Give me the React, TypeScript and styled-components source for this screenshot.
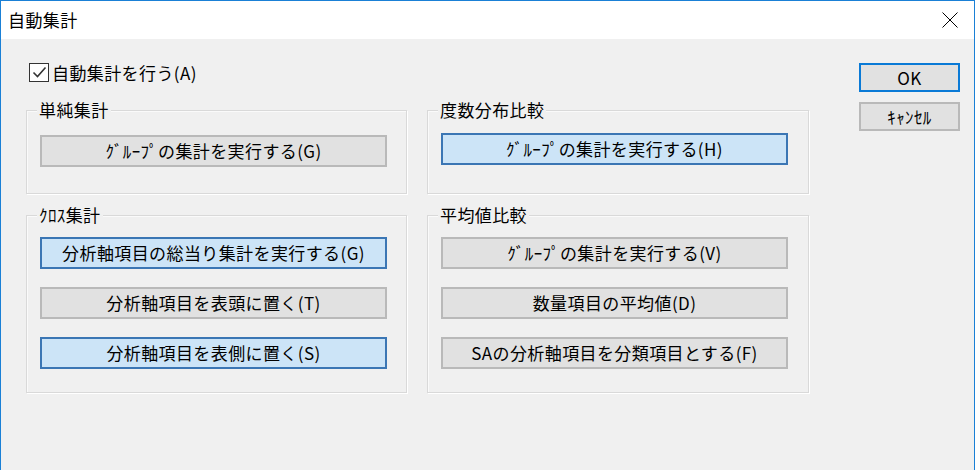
import React from "react";
import styled, { createGlobalStyle } from "styled-components";

const FONT = `"Noto Sans CJK JP", "Noto Sans CJK SC", "Noto Sans", sans-serif`;

const Global = createGlobalStyle`
  html, body { margin: 0; padding: 0; background: #ffffff; }
  * { box-sizing: border-box; }
`;

const Window = styled.div`
  width: 975px;
  height: 470px;
  border: 1px solid #1a80d6;
  border-bottom: none;
  display: flex;
  flex-direction: column;
  overflow: hidden;
  font-family: ${FONT};
  font-size: 17px;
  letter-spacing: 0.4px;
  color: #000;
`;

const TitleBar = styled.div`
  height: 38px;
  flex: none;
  background: #ffffff;
  display: flex;
  align-items: center;
`;

const Title = styled.div`
  padding-left: 7px;
  font-size: 17px;
  line-height: 20px;
  color: #000;
`;

const CloseButton = styled.div`
  margin-left: auto;
  width: 48px;
  height: 38px;
  display: flex;
  align-items: center;
  justify-content: center;
`;

const Body = styled.div`
  flex: 1;
  background: #f0f0f0;
  display: flex;
  padding: 24px 14px 0 25px;
`;

const Main = styled.div`
  display: flex;
  flex-direction: column;
`;

const CheckRow = styled.label`
  display: flex;
  align-items: center;
  gap: 3px;
  margin-left: 3px;
  height: 19px;
  line-height: 19px;
`;

const Box = styled.span`
  width: 20px;
  height: 19px;
  border: 1px solid #333333;
  background: #ffffff;
  display: flex;
  align-items: center;
  justify-content: center;
`;

const Groups = styled.div`
  margin-top: 28px;
  display: grid;
  grid-template-columns: 381px 382px;
  grid-template-rows: 84px 178px;
  column-gap: 20px;
  row-gap: 21px;
`;

const Group = styled.div<{ $padTop: number }>`
  position: relative;
  border: 1px solid #d9d9d9;
  box-shadow: 1px 1px 0 #ffffff, inset 1px 1px 0 #fafafa;
  padding: ${(p) => p.$padTop}px 0 0 13px;
  display: flex;
  flex-direction: column;
  gap: 18px;
`;

const Legend = styled.span`
  position: absolute;
  top: -11px;
  left: 10px;
  padding: 0 2px;
  background: #f0f0f0;
  line-height: 20px;
  font-size: 17px;
`;

const Button = styled.button<{ $active?: boolean }>`
  width: 347px;
  height: 32px;
  flex: none;
  margin: 0;
  padding: 0;
  font-family: ${FONT};
  font-size: 17px;
  letter-spacing: 0.4px;
  line-height: 20px;
  color: #000;
  background: ${(p) => (p.$active ? "#cce4f7" : "#e1e1e1")};
  border: 2px solid ${(p) => (p.$active ? "#3b76b4" : "#b9b9b9")};
  display: flex;
  align-items: center;
  justify-content: center;
  cursor: default;
`;

const Side = styled.div`
  margin-left: auto;
  display: flex;
  flex-direction: column;
  gap: 10px;
`;

const DialogButton = styled.button<{ $default?: boolean }>`
  width: 101px;
  height: 29px;
  margin: 0;
  padding: 0;
  font-family: ${FONT};
  font-size: 17px;
  letter-spacing: 0.4px;
  line-height: 20px;
  color: #000;
  background: #e1e1e1;
  border: 2px solid ${(p) => (p.$default ? "#0a7ad6" : "#b9b9b9")};
  display: flex;
  align-items: center;
  justify-content: center;
  cursor: default;
`;

const CheckIcon = () => (
  <svg width="15" height="13" viewBox="0 0 15 13">
    <path d="M1.5 6.5 L5.5 10.5 L13.5 1.5" fill="none" stroke="#333" strokeWidth="1.6" />
  </svg>
);

const CloseIcon = () => (
  <svg width="16" height="16" viewBox="0 0 16 16">
    <path d="M0.5 0.5 L15.5 15.5 M15.5 0.5 L0.5 15.5" stroke="#000" strokeWidth="1" />
  </svg>
);

export default function App() {
  return (
    <>
      <Global />
      <Window>
        <TitleBar>
          <Title>自動集計</Title>
          <CloseButton>
            <CloseIcon />
          </CloseButton>
        </TitleBar>
        <Body>
          <Main>
            <CheckRow>
              <Box>
                <CheckIcon />
              </Box>
              <span>自動集計を行う(A)</span>
            </CheckRow>
            <Groups>
              <Group $padTop={24}>
                <Legend>単純集計</Legend>
                <Button>ｸﾞﾙｰﾌﾟの集計を実行する(G)</Button>
              </Group>
              <Group $padTop={22}>
                <Legend>度数分布比較</Legend>
                <Button $active>ｸﾞﾙｰﾌﾟの集計を実行する(H)</Button>
              </Group>
              <Group $padTop={21}>
                <Legend>ｸﾛｽ集計</Legend>
                <Button $active>分析軸項目の総当り集計を実行する(G)</Button>
                <Button>分析軸項目を表頭に置く(T)</Button>
                <Button $active>分析軸項目を表側に置く(S)</Button>
              </Group>
              <Group $padTop={21}>
                <Legend>平均値比較</Legend>
                <Button>ｸﾞﾙｰﾌﾟの集計を実行する(V)</Button>
                <Button>数量項目の平均値(D)</Button>
                <Button>SAの分析軸項目を分類項目とする(F)</Button>
              </Group>
            </Groups>
          </Main>
          <Side>
            <DialogButton $default>OK</DialogButton>
            <DialogButton>ｷｬﾝｾﾙ</DialogButton>
          </Side>
        </Body>
      </Window>
    </>
  );
}
